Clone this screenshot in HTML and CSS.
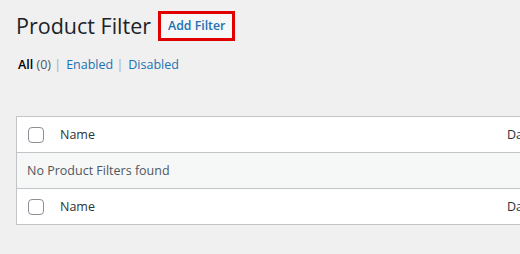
FILE: index.html
```html
<!DOCTYPE html>
<html lang="en">
<head>
    <meta charset="UTF-8">
    <title>Product Filter</title>
    <link rel="stylesheet" href="styles.css">
</head>
<body>

<div class="wrap">
    <div class="title-row">
        <h1 class="page-title">Product Filter</h1>
        <a href="#" class="title-action">Add Filter</a>
    </div>

    <ul class="subsubsub">
        <li><a href="#" class="current">All <span class="count">(0)</span></a> |</li>
        <li><a href="#">Enabled</a> |</li>
        <li><a href="#">Disabled</a></li>
    </ul>

    <table class="list-table">
        <thead>
            <tr>
                <td class="check-col"><span class="checkbox"></span></td>
                <th class="name-col">Name</th>
                <th class="date-col">Date</th>
            </tr>
        </thead>
        <tbody>
            <tr class="no-items">
                <td colspan="3">No Product Filters found</td>
            </tr>
        </tbody>
        <tfoot>
            <tr>
                <td class="check-col"><span class="checkbox"></span></td>
                <th class="name-col">Name</th>
                <th class="date-col">Date</th>
            </tr>
        </tfoot>
    </table>
</div>

</body>
</html>
```

FILE: styles.css
```css
body {
    margin: 0;
    background-color: #f0f0f1;
    color: #1d2327;
    font-family: "Open Sans", "Noto Sans", sans-serif;
    font-size: 12.5px;
    overflow: hidden;
}
.wrap {
    padding: 9px 0 0 16px;
    width: 624px;
}
.title-row {
    display: flex;
    align-items: center;
    gap: 7px;
    height: 34px;
}
.page-title {
    margin: 0;
    font-size: 21.5px;
    font-weight: 400;
    line-height: 30px;
}
.title-action {
    display: inline-block;
    color: #2271b1;
    text-decoration: none;
    font-size: 12.3px;
    font-weight: 600;
    line-height: 24px;
    padding: 0 7px;
    background-color: #f6f7f7;
    border: 3px solid #e10000;
}
.subsubsub {
    list-style: none;
    margin: 12px 0 0;
    padding: 0 0 0 2px;
    display: flex;
    gap: 5px;
    color: #a7aaad;
    line-height: 20px;
}
.subsubsub a {
    color: #2271b1;
    text-decoration: none;
}
.subsubsub a.current {
    color: #000;
    font-weight: 600;
}
.subsubsub .count {
    color: #50575e;
    font-weight: 400;
}
.list-table {
    margin-top: 41px;
    width: 622px;
    border-collapse: collapse;
    background-color: #fff;
    border: 1px solid #c3c4c7;
}
.list-table th,
.list-table td {
    text-align: left;
    font-weight: 400;
    height: 35px;
    padding: 0 10px;
    vertical-align: middle;
}
.list-table thead tr {
    border-bottom: 1px solid #c3c4c7;
}
.list-table tfoot tr {
    border-top: 1px solid #c3c4c7;
}
.list-table .check-col {
    width: 23px;
    padding-right: 0;
}
.name-col {
    color: #2c3338;
}
.date-col {
    width: 120px;
    color: #2c3338;
}
.no-items td {
    background-color: #f6f7f7;
    color: #50575e;
}
.checkbox {
    display: block;
    width: 14px;
    height: 14px;
    border: 1px solid #8c8f94;
    border-radius: 4px;
    margin-left: 1px;
}
```
